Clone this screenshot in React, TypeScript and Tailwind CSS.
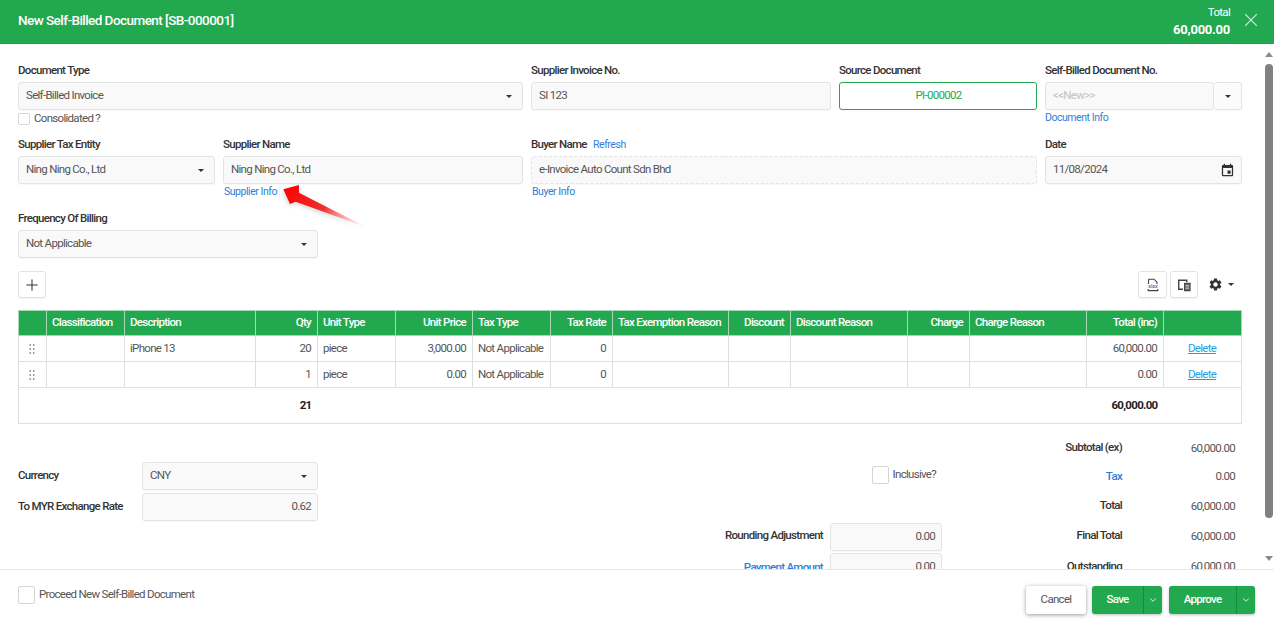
import React from "react";
import { X, Plus, ChevronDown } from "lucide-react";
import { MdEvent, MdSettings } from "react-icons/md";

const Caret = ({ className = "" }: { className?: string }) => (
  <svg width="6" height="3" viewBox="0 0 6 3" className={className}>
    <path d="M0 0h6L3 3z" fill="#333" />
  </svg>
);

const Label = ({ children }: { children: React.ReactNode }) => (
  <div className="h-4 mb-[3px] text-[11.5px] leading-[15px] font-medium text-[#333] whitespace-nowrap">{children}</div>
);

const Box = ({ children, className = "" }: { children?: React.ReactNode; className?: string }) => (
  <div className={`h-7 flex items-center pl-[7px] pr-[6px] rounded-[3px] border border-[#e4e4e4] bg-[#f9f9f9] text-[11.5px] text-[#555] shadow-[0_1px_1px_rgba(0,0,0,0.03)] ${className}`}>
    {children}
  </div>
);

const Select = ({ value, className = "" }: { value: string; className?: string }) => (
  <Box className={`justify-between !pr-[10px] ${className}`}>
    <span>{value}</span>
    <Caret />
  </Box>
);

const Lnk = ({ children, className = "" }: { children: React.ReactNode; className?: string }) => (
  <div className={`text-[10.5px] tracking-[-0.45px] leading-[14px] text-[#2f7ed8] whitespace-nowrap ${className}`}>{children}</div>
);

const Grip = () => (
  <svg width="6" height="10" viewBox="0 0 6 10" className="mx-auto">
    {[1, 5, 9].map((y) => (
      <g key={y} fill="#666">
        <rect x="0.5" y={y - 0.7} width="1.4" height="1.4" />
        <rect x="4" y={y - 0.7} width="1.4" height="1.4" />
      </g>
    ))}
  </svg>
);

const widths = [28, 78, 131, 62, 78, 77, 78, 62, 116, 62, 117, 62, 117, 77, 78];
const heads: [string, boolean][] = [
  ["", false],
  ["Classification", false],
  ["Description", false],
  ["Qty", true],
  ["Unit Type", false],
  ["Unit Price", true],
  ["Tax Type", false],
  ["Tax Rate", true],
  ["Tax Exemption Reason", false],
  ["Discount", true],
  ["Discount Reason", false],
  ["Charge", true],
  ["Charge Reason", false],
  ["Total (inc)", true],
  ["", false],
];
const rows = [
  ["iPhone 13", "20", "piece", "3,000.00", "Not Applicable", "0", "60,000.00"],
  ["", "1", "piece", "0.00", "Not Applicable", "0", "0.00"],
];

const Td = ({ children, right, center }: { children?: React.ReactNode; right?: boolean; center?: boolean }) => (
  <td className={`border border-[#dfdfdf] pl-[5px] pr-[6px] text-[11.5px] text-[#555] whitespace-nowrap ${right ? "text-right" : center ? "text-center" : "text-left"}`}>
    {children}
  </td>
);

const TotalRow = ({ label, value, h, blue, valueClass = "" }: { label: string; value: string; h: string; blue?: boolean; valueClass?: string }) => (
  <div className={`flex items-center ${h}`}>
    <div className={`w-[180px] text-right text-[11.5px] font-medium whitespace-nowrap ${blue ? "text-[#2f7ed8]" : "text-[#333]"}`}>{label}</div>
    <div className={`w-[113px] text-right text-[11.5px] text-[#555] ${valueClass}`}>{value}</div>
  </div>
);

export default function App() {
  return (
    <div className="w-[1274px] h-[632px] flex flex-col overflow-hidden bg-white font-['Roboto',sans-serif] tracking-[-0.7px]">
      <header className="h-11 shrink-0 flex items-center bg-[#22a94f] border-b border-[#1f9e49] pl-[18px] pr-[18px] text-white">
        <div className="flex-1 text-[13.5px] tracking-[-0.55px] font-medium mb-[3px]">New Self-Billed Document [SB-000001]</div>
        <div className="text-right mr-[10px] mt-[-1px]">
          <div className="text-[11.5px] leading-[18px]">Total</div>
          <div className="text-[13px] tracking-[-0.25px] leading-[18px] font-bold">60,000.00</div>
        </div>
        <X size={22} strokeWidth={1.2} className="text-[#c4e8d0] mr-[-6px] mb-[3px] shrink-0" />
      </header>

      <div className="flex-1 min-h-0 flex">
        <main className="w-[1263px] overflow-hidden relative px-[18px]">
          <div className="w-[1224px] pt-[19px]">
            <div className="flex gap-2 items-start">
              <div className="w-[505px]">
                <Label>Document Type</Label>
                <Select value="Self-Billed Invoice" />
                <div className="flex items-center h-[13px] mt-[2px] text-[11.5px] text-[#555]">
                  <span className="w-3 h-3 rounded-[2px] border border-[#d5d5d5] bg-white mr-1" />
                  Consolidated ?
                </div>
              </div>
              <div className="w-[300px]">
                <Label>Supplier Invoice No.</Label>
                <Box>SI 123</Box>
              </div>
              <div className="w-[198px]">
                <Label>Source Document</Label>
                <Box className="justify-center !bg-white !border-[#22a94f] !text-[#22a94f]">PI-000002</Box>
              </div>
              <div className="w-[197px]">
                <Label>Self-Billed Document No.</Label>
                <div className="flex">
                  <Box className="flex-1 !text-[#c2c2c2]">&lt;&lt;New&gt;&gt;</Box>
                  <Box className="w-7 justify-center !px-0 border-l-0 !bg-[#fbfbfb]"><Caret /></Box>
                </div>
                <Lnk className="mt-px">Document Info</Lnk>
              </div>
            </div>

            <div className="flex gap-2 items-start mt-3">
              <div className="w-[197px]">
                <Label>Supplier Tax Entity</Label>
                <Select value="Ning Ning Co., Ltd" />
              </div>
              <div className="w-[300px]">
                <Label>Supplier Name</Label>
                <Box>Ning Ning Co., Ltd</Box>
                <Lnk className="ml-px mt-px">Supplier Info</Lnk>
              </div>
              <div className="w-[506px]">
                <Label>
                  Buyer Name <Lnk className="inline ml-[4px] font-normal">Refresh</Lnk>
                </Label>
                <Box className="!border-dashed">e-Invoice Auto Count Sdn Bhd</Box>
                <Lnk className="ml-px mt-px">Buyer Info</Lnk>
              </div>
              <div className="w-[197px]">
                <Label>Date</Label>
                <Box className="justify-between !pr-[6px]">
                  <span>11/08/2024</span>
                  <MdEvent size={15} className="text-[#333]" />
                </Box>
              </div>
            </div>

            <div className="w-[300px] mt-3">
              <Label>Frequency Of Billing</Label>
              <Select value="Not Applicable" />
            </div>

            <div className="flex items-center justify-between h-[27px] mt-[13px]">
              <button className="w-7 h-[27px] flex items-center justify-center rounded-[3px] border border-[#e4e4e4] bg-white text-[#333] shadow-[0_1px_1px_rgba(0,0,0,0.05)]">
                <Plus size={18} strokeWidth={1.4} />
              </button>
              <div className="flex items-center">
                <button className="w-[29px] h-[27px] flex items-center justify-center rounded-[3px] border border-[#e4e4e4] bg-white shadow-[0_1px_1px_rgba(0,0,0,0.05)]">
                  <svg width="14" height="14" viewBox="0 0 14 14" fill="none" stroke="#444" strokeWidth="1.1">
                    <path d="M2.5 6V2.2a1 1 0 0 1 1-1h4.5l3 3V6" />
                    <path d="M2.2 11v1.6h9.6V11" />
                    <text x="7" y="10" textAnchor="middle" fontSize="5.5" letterSpacing="0" fill="#444" stroke="none" fontFamily="Roboto">xlsx</text>
                  </svg>
                </button>
                <button className="w-7 h-[27px] ml-[3px] flex items-center justify-center rounded-[3px] border border-[#e4e4e4] bg-white shadow-[0_1px_1px_rgba(0,0,0,0.05)]">
                  <svg width="14" height="14" viewBox="0 0 14 14">
                    <path d="M1 1.5h9.5v2.6H9V3H2.4v7.5H6V12H1z" fill="#444" />
                    <rect x="7" y="4.8" width="6.6" height="8.4" rx="0.5" fill="#444" />
                    <path d="M8.3 7.2h4M8.3 9h4M8.3 10.8h4" stroke="#fff" strokeWidth="0.8" />
                  </svg>
                </button>
                <div className="flex items-center ml-[10px] mr-[8px]">
                  <MdSettings size={15} className="text-[#333]" />
                  <Caret className="ml-[5px]" />
                </div>
              </div>
            </div>

            <table className="table-fixed w-[1224px] mt-3 border-collapse">
              <colgroup>
                {widths.map((w, i) => (
                  <col key={i} style={{ width: w }} />
                ))}
              </colgroup>
              <thead>
                <tr className="h-[25px] bg-[#22a94f]">
                  {heads.map(([h, right], i) => (
                    <th key={i} className={`border border-[#a6d8b6] pl-[5px] pr-[6px] text-[11.5px] font-medium text-white whitespace-nowrap ${right ? "text-right" : "text-left"}`}>
                      {h}
                    </th>
                  ))}
                </tr>
              </thead>
              <tbody>
                {rows.map((r, i) => (
                  <tr key={i} className="h-[26px]">
                    <Td center><Grip /></Td>
                    <Td />
                    <Td>{r[0]}</Td>
                    <Td right>{r[1]}</Td>
                    <Td>{r[2]}</Td>
                    <Td right>{r[3]}</Td>
                    <Td>{r[4]}</Td>
                    <Td right>{r[5]}</Td>
                    <Td />
                    <Td />
                    <Td />
                    <Td />
                    <Td />
                    <Td right>{r[6]}</Td>
                    <Td center><span className="text-[#1e9fe8] underline">Delete</span></Td>
                  </tr>
                ))}
                <tr className="h-9 border border-[#dfdfdf]">
                  <td colSpan={4} className="px-[6px] text-right text-[11.5px] font-bold text-[#222]">21</td>
                  <td colSpan={10} className="px-[6px] text-right text-[11.5px] font-bold text-[#222]">60,000.00</td>
                  <td />
                </tr>
              </tbody>
            </table>

            <div className="flex items-start">
              <div className="w-[300px] pt-[38px]">
                <div className="flex items-center">
                  <div className="w-[124px] text-[11.5px] font-medium text-[#333]">Currency</div>
                  <Select value="CNY" className="flex-1" />
                </div>
                <div className="flex items-center mt-[3px]">
                  <div className="w-[124px] text-[11.5px] font-medium text-[#333] whitespace-nowrap">To MYR Exchange Rate</div>
                  <Box className="flex-1 justify-end">0.62</Box>
                </div>
              </div>
              <div className="w-[624px] pt-[42px] flex flex-col items-end">
                <div className="flex items-center h-[18px] mr-[6px] text-[11.5px] text-[#555]">
                  <span className="w-[17px] h-[18px] rounded-[2px] border border-[#d5d5d5] bg-white mr-[4px]" />
                  Inclusive?
                </div>
                <div className="flex items-center mt-[39px]">
                  <div className="mr-[7px] mb-[2px] text-[11.5px] font-medium text-[#333]">Rounding Adjustment</div>
                  <Box className="w-[112px] justify-end">0.00</Box>
                </div>
                <div className="flex items-center mt-[2px]">
                  <div className="mr-[7px] mt-[2px] text-[11.5px] font-medium text-[#2f7ed8]">Payment Amount</div>
                  <Box className="w-[112px] justify-end">0.00</Box>
                </div>
              </div>
              <div className="w-[300px] pt-[9px] flex flex-col items-end pr-[7px]">
                <TotalRow label="Subtotal (ex)" value="60,000.00" h="h-[29px]" valueClass="pt-[3px]" />
                <TotalRow label="Tax" value="0.00" h="h-[29px]" blue />
                <TotalRow label="Total" value="60,000.00" h="h-[29px]" valueClass="pt-[2px]" />
                <TotalRow label="Final Total" value="60,000.00" h="h-[31px]" valueClass="pt-[3px]" />
                <TotalRow label="Outstanding" value="60,000.00" h="h-[31px]" />
              </div>
            </div>
          </div>

          <svg width="90" height="50" viewBox="0 0 90 50" className="absolute left-[280px] top-[138px] pointer-events-none drop-shadow-[-1px_2px_2px_rgba(0,0,0,0.15)]">
            <defs>
              <linearGradient id="arrowFill" x1="10" y1="10" x2="86" y2="45" gradientUnits="userSpaceOnUse">
                <stop offset="0" stopColor="#f80808" />
                <stop offset="0.45" stopColor="#f22f2f" />
                <stop offset="1" stopColor="#f5b0b0" stopOpacity="0.1" />
              </linearGradient>
            </defs>
            <path d="M3.3 7.3 L19 3 L19 10.7 L86 45 L15.7 19.7 L10 22 Z" fill="url(#arrowFill)" />
          </svg>
        </main>

        <div className="w-[11px] shrink-0 flex flex-col items-center pt-2 bg-white">
          <svg width="8" height="5" viewBox="0 0 8 5"><path d="M4 0l4 5H0z" fill="#8a8a8a" /></svg>
          <div className="w-[8px] h-[454px] mt-[7px] rounded-full bg-[#808080]" />
          <div className="flex-1" />
          <svg width="8" height="5" viewBox="0 0 8 5"><path d="M0 0h8L4 5z" fill="#8a8a8a" /></svg>
          <div className="h-[8px]" />
        </div>
      </div>

      <footer className="h-[63px] shrink-0 flex items-start justify-between border-t border-[#e6e6e6] pt-4 pl-[18px] pr-[19px] bg-white">
        <div className="flex items-center h-[18px] text-[11.5px] text-[#555]">
          <span className="w-[17px] h-[18px] rounded-[2px] border border-[#d5d5d5] bg-white mr-[4px]" />
          Proceed New Self-Billed Document
        </div>
        <div className="flex items-center h-7">
          <button className="w-[60px] h-7 rounded-[3px] bg-white text-[11.5px] text-[#555] shadow-[0_1px_4px_rgba(0,0,0,0.4)]">Cancel</button>
          <div className="flex h-7 w-[70px] ml-[6px] rounded-[3px] bg-[#22a94f] text-white text-[11.5px] font-medium shadow-[0_1px_3px_rgba(0,0,0,0.25)]">
            <span className="w-[51px] flex items-center justify-center">Save</span>
            <span className="flex-1 flex items-center justify-center border-l border-[#1a8a40]"><ChevronDown size={10} /></span>
          </div>
          <div className="flex h-7 w-[86px] ml-[7px] rounded-[3px] bg-[#22a94f] text-white text-[11.5px] font-medium shadow-[0_1px_3px_rgba(0,0,0,0.25)]">
            <span className="w-[67px] flex items-center justify-center">Approve</span>
            <span className="flex-1 flex items-center justify-center border-l border-[#1a8a40]"><ChevronDown size={10} /></span>
          </div>
        </div>
      </footer>
    </div>
  );
}
